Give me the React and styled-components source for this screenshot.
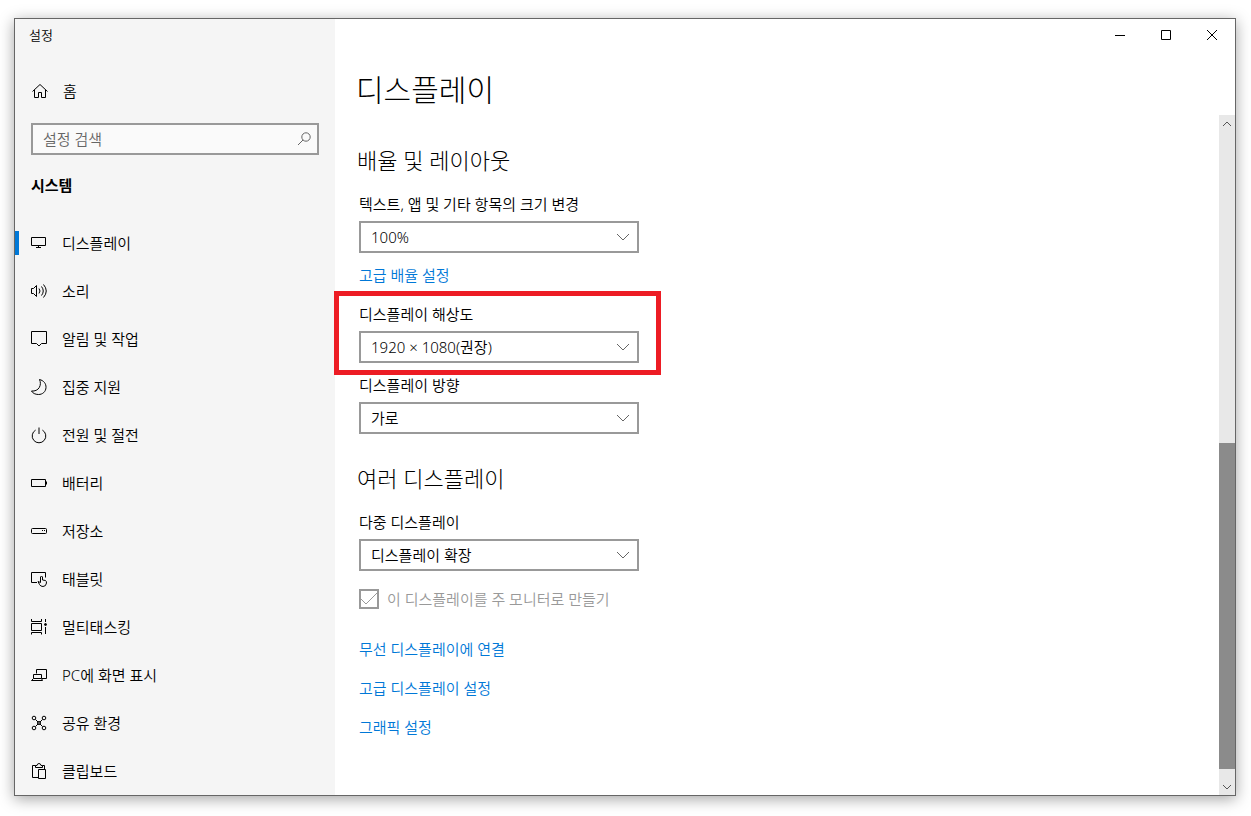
import React from "react";
import styled, { createGlobalStyle, css } from "styled-components";

const GlobalStyle = createGlobalStyle`
  *, *::before, *::after { box-sizing: border-box; }
  body {
    margin: 0;
    background: #fff;
    color: #000;
    font-family: "Noto Sans", "Noto Sans CJK KR", sans-serif;
    font-size: 15px;
    font-weight: 350;
    line-height: 20px;
  }
  h1, h2, p, ul { margin: 0; padding: 0; font-weight: 350; }
  button, input, select { font: inherit; color: inherit; }
`;

const Page = styled.div`
  display: flex;
  min-height: 100vh;
  padding: 18px 15px 20px 14px;
`;

const Window = styled.div`
  display: flex;
  flex: 1;
  border: 1px solid #666;
  background: #fff;
  box-shadow: 0 3px 14px rgba(0, 0, 0, 0.36);
`;

const Sidebar = styled.aside`
  flex: 0 0 320px;
  background: #f5f5f5;
`;

const WindowTitle = styled.p`
  padding: 6px 14px;
  font-size: 13px;
`;

const rowStyles = css`
  display: flex;
  align-items: center;
  gap: 14px;
  height: 48px;
  padding: 0 15px;
  color: #000;
  text-decoration: none;
`;

const HomeLink = styled.a`
  ${rowStyles}
  margin-top: 16px;
  padding: 0 16px;
`;

const SearchBox = styled.label`
  display: flex;
  align-items: center;
  height: 32px;
  margin: 8px 16px 0;
  padding: 0 4px 0 10px;
  border: 2px solid #999;
  background: #fafafa;
  color: #666;
`;

const SearchInput = styled.input`
  flex: 1;
  min-width: 0;
  padding: 0;
  border: 0;
  outline: 0;
  background: transparent;
  &::placeholder { color: #666; opacity: 1; }
`;

const Category = styled.h2`
  padding: 20px 16px 24px;
  font-size: 15px;
  font-weight: 700;
`;

const NavList = styled.ul`
  list-style: none;
`;

const NavLink = styled.a`
  ${rowStyles}
  position: relative;
  ${(p) =>
    p.$active &&
    css`
      &::before {
        content: "";
        position: absolute;
        left: 0;
        top: 12px;
        width: 4px;
        height: 24px;
        background: #0078d7;
      }
    `}
`;

const Icon = styled.svg`
  flex: none;
  display: block;
  width: 18px;
  height: 18px;
  fill: none;
  stroke: ${(p) => p.$color || "#000"};
  stroke-width: 1;
`;

const Main = styled.main`
  display: flex;
  flex: 1;
  flex-direction: column;
  min-width: 0;
`;

const WindowControls = styled.div`
  display: flex;
  justify-content: flex-end;
  height: 32px;
`;

const ControlButton = styled.button`
  display: grid;
  place-items: center;
  width: 46px;
  padding: 0;
  border: 0;
  background: transparent;
`;

const PageTitle = styled.h1`
  height: 64px;
  padding: 19px 21px 0;
  font-size: 30px;
  font-weight: 300;
  line-height: 40px;
`;

const Scroller = styled.div`
  display: flex;
  flex: 1;
`;

const Content = styled.div`
  display: flex;
  flex: 1;
  flex-direction: column;
  align-items: flex-start;
  padding: 29px 22px 24px;
`;

const SectionTitle = styled.h2`
  margin-top: ${(p) => (p.$spaced ? "28px" : "0")};
  font-size: 22px;
  font-weight: 300;
  line-height: 32px;
`;

const Group = styled.div`
  display: flex;
  flex-direction: column;
  align-items: flex-start;
  padding-left: 2px;
`;

const Field = styled.div`
  position: relative;
  display: flex;
  flex-direction: column;
  gap: 7px;
  width: 280px;
  margin-top: ${(p) => p.$gap || 18}px;
`;

const Highlight = styled.div`
  position: absolute;
  inset: -13px -22px -12px -25px;
  border: 5px solid #ed1c24;
  pointer-events: none;
`;

const SelectBox = styled.div`
  display: grid;
  align-items: center;
  height: 32px;
  & > * { grid-area: 1 / 1; }
  & > svg { justify-self: end; margin-right: 7px; pointer-events: none; }
`;

const Select = styled.select`
  appearance: none;
  width: 100%;
  height: 32px;
  padding: 0 32px 0 10px;
  border: 2px solid #999;
  border-radius: 0;
  background: #fff;
`;

const TextLink = styled.a`
  margin-top: ${(p) => p.$gap || 19}px;
  color: #0078d7;
  text-decoration: none;
`;

const CheckLabel = styled.label`
  display: flex;
  align-items: center;
  gap: 8px;
  margin: 18px 0 11px;
  color: #999;
`;

const CheckMark = styled.span`
  display: grid;
  width: 20px;
  height: 20px;
  & > * { grid-area: 1 / 1; }
  & > svg { margin: 1px; pointer-events: none; }
`;

const Checkbox = styled.input`
  appearance: none;
  width: 20px;
  height: 20px;
  margin: 0;
  border: 2px solid #999;
  background: #fff;
`;

const Scrollbar = styled.div`
  display: flex;
  flex: 0 0 16px;
  flex-direction: column;
  min-width: 0;
  background: #e8e8e8;
`;

const ScrollButton = styled.button`
  display: flex;
  align-items: center;
  justify-content: center;
  width: 16px;
  height: 17px;
  padding: 0;
  border: 0;
  background: transparent;
  & > svg { width: 16px; height: 16px; }
`;

const Track = styled.div`
  flex: ${(p) => p.$share} 0 0;
  background: ${(p) => (p.$thumb ? "#8b8b8b" : "transparent")};
`;

const icons = {
  home: (
    <path d="M1.5 9.5L9 2.5L16.5 9.5M3.5 8V15.5H7.5V10.5H10.5V15.5H14.5V8" />
  ),
  search: (
    <>
      <circle cx="11" cy="7" r="4.2" />
      <path d="M8 10L3 15" />
    </>
  ),
  display: <path d="M1.5 3.5H15.5V11.5H1.5ZM8.5 11.5V13.5M6 13.5H11" />,
  sound: (
    <path d="M1.5 6.5H3.5L6.5 3.5V14.5L3.5 11.5H1.5ZM9 6.5Q11 9 9 11.5M11.5 4.5Q15 9 11.5 13.5M13.5 2.5Q19 9 13.5 15.5" />
  ),
  notify: <path d="M1.5 1.5H16.5V13.5H11.5L9 16L6.5 13.5H1.5Z" />,
  moon: (
    <path d="M9.5 1.5C13.6 2.5 16.2 5.6 16 9.5C15.8 13.8 12.5 16.5 8.5 16.5C5.2 16.5 2.7 15.2 1.5 13C5 13.4 7.8 12 9.3 9.5C10.8 6.8 10.6 4 9.5 1.5Z" />
  ),
  power: <path d="M5.6 4.1A6.8 6.8 0 1 0 12.4 4.1M9 1.5V8" />,
  battery: <path d="M1.5 5.5H15.5V12.5H1.5ZM16.5 7.5V10.5" />,
  storage: (
    <>
      <rect x="1.5" y="6.5" width="15" height="5" rx="1" />
      <path d="M12 8.5H13M14 8.5H15" />
    </>
  ),
  tablet: (
    <path d="M7 12.5H1.5V2.5H15.5V7.5M8 11.5L10.5 12.5V7Q11.5 5 12.5 7V10L15.5 10.5Q16.5 11 16.5 13Q16 16.5 13 16.5Q10.5 16.5 9.5 14.5L8 11.5" />
  ),
  multitask: (
    <>
      <path d="M1.5 1V3.5H11.5V1M1.5 5.5H11.5V12.5H1.5ZM1.5 16.5V14.5H11.5V16.5M15.5 1V4M15.5 9V16" />
      <circle cx="15.5" cy="6.5" r="1" fill="#000" />
    </>
  ),
  project: (
    <path d="M6.5 7.5V3.5H16.5V12.5H12M3.5 8.5H11.5V12.5H3.5ZM3.5 12.5L1.5 14.5H12.5L11.5 12.5" />
  ),
  shared: (
    <>
      <circle cx="4" cy="4" r="1.8" />
      <circle cx="14" cy="4" r="1.8" />
      <circle cx="4" cy="14" r="1.8" />
      <circle cx="14" cy="14" r="1.8" />
      <circle cx="9" cy="9" r="1.5" fill="#777" />
      <path d="M5.5 5.5L8 8M12.5 5.5L10 8M5.5 12.5L8 10M12.5 12.5L10 10" />
    </>
  ),
  clipboard: (
    <path d="M8 15.5H2.5V3.5H5.5M12.5 3.5H14.5V7M5.5 5.5V3.5H7Q7.2 1.5 9 1.5Q10.8 1.5 11 3.5H12.5V5.5ZM8.5 7.5H15.5V16.5H8.5Z" />
  ),
};

const NAV = [
  ["display", "디스플레이"],
  ["sound", "소리"],
  ["notify", "알림 및 작업"],
  ["moon", "집중 지원"],
  ["power", "전원 및 절전"],
  ["battery", "배터리"],
  ["storage", "저장소"],
  ["tablet", "태블릿"],
  ["multitask", "멀티태스킹"],
  ["project", "PC에 화면 표시"],
  ["shared", "공유 환경"],
  ["clipboard", "클립보드"],
];

function Glyph({ name, color }) {
  return (
    <Icon viewBox="0 0 18 18" $color={color} aria-hidden="true">
      {icons[name]}
    </Icon>
  );
}

function SelectField({ id, label, value, gap, highlighted }) {
  return (
    <Field $gap={gap}>
      <label htmlFor={id}>{label}</label>
      <SelectBox>
        <Select id={id} defaultValue={value}>
          <option>{value}</option>
        </Select>
        <Icon viewBox="0 0 18 18" $color="#666" aria-hidden="true">
          <path d="M3 6L9 12L15 6" />
        </Icon>
      </SelectBox>
      {highlighted && <Highlight />}
    </Field>
  );
}

export default function App() {
  return (
    <Page>
      <GlobalStyle />
      <Window>
        <Sidebar>
          <WindowTitle>설정</WindowTitle>
          <HomeLink href="#home">
            <Glyph name="home" />
            홈
          </HomeLink>
          <SearchBox>
            <SearchInput type="text" placeholder="설정 검색" aria-label="설정 검색" />
            <Glyph name="search" color="#666" />
          </SearchBox>
          <Category>시스템</Category>
          <nav>
            <NavList>
              {NAV.map(([icon, text], i) => (
                <li key={icon}>
                  <NavLink href={`#${icon}`} $active={i === 0}>
                    <Glyph name={icon} />
                    {text}
                  </NavLink>
                </li>
              ))}
            </NavList>
          </nav>
        </Sidebar>
        <Main>
          <WindowControls>
            <ControlButton aria-label="최소화">
              <Icon viewBox="0 0 18 18"><path d="M4 9.5H14" /></Icon>
            </ControlButton>
            <ControlButton aria-label="최대화">
              <Icon viewBox="0 0 18 18"><path d="M4.5 4.5H13.5V13.5H4.5Z" /></Icon>
            </ControlButton>
            <ControlButton aria-label="닫기">
              <Icon viewBox="0 0 18 18"><path d="M4 4L14 14M14 4L4 14" /></Icon>
            </ControlButton>
          </WindowControls>
          <PageTitle>디스플레이</PageTitle>
          <Scroller>
            <Content>
              <SectionTitle>배율 및 레이아웃</SectionTitle>
              <Group>
                <SelectField id="scale" label="텍스트, 앱 및 기타 항목의 크기 변경" value="100%" />
                <TextLink href="#scaling" $gap={12}>고급 배율 설정</TextLink>
                <SelectField id="resolution" label="디스플레이 해상도" value="1920 × 1080(권장)" gap={19} highlighted />
                <SelectField id="orientation" label="디스플레이 방향" value="가로" gap={12} />
              </Group>
              <SectionTitle $spaced>여러 디스플레이</SectionTitle>
              <Group>
                <SelectField id="multiple" label="다중 디스플레이" value="디스플레이 확장" />
                <CheckLabel>
                  <CheckMark>
                    <Checkbox type="checkbox" defaultChecked disabled />
                    <Icon viewBox="0 0 18 18" $color="#999" aria-hidden="true">
                      <path d="M1 9L6 14L17 3" />
                    </Icon>
                  </CheckMark>
                  이 디스플레이를 주 모니터로 만들기
                </CheckLabel>
                <TextLink href="#wireless">무선 디스플레이에 연결</TextLink>
                <TextLink href="#advanced">고급 디스플레이 설정</TextLink>
                <TextLink href="#graphics">그래픽 설정</TextLink>
              </Group>
            </Content>
            <Scrollbar>
              <ScrollButton aria-label="위로 스크롤">
                <Icon viewBox="0 0 16 16" $color="#555"><path d="M4 10L8 6L12 10" /></Icon>
              </ScrollButton>
              <Track $share={311} />
              <Track $share={326} $thumb />
              <Track $share={9} />
              <ScrollButton aria-label="아래로 스크롤">
                <Icon viewBox="0 0 16 16" $color="#555"><path d="M4 6L8 10L12 6" /></Icon>
              </ScrollButton>
            </Scrollbar>
          </Scroller>
        </Main>
      </Window>
    </Page>
  );
}
